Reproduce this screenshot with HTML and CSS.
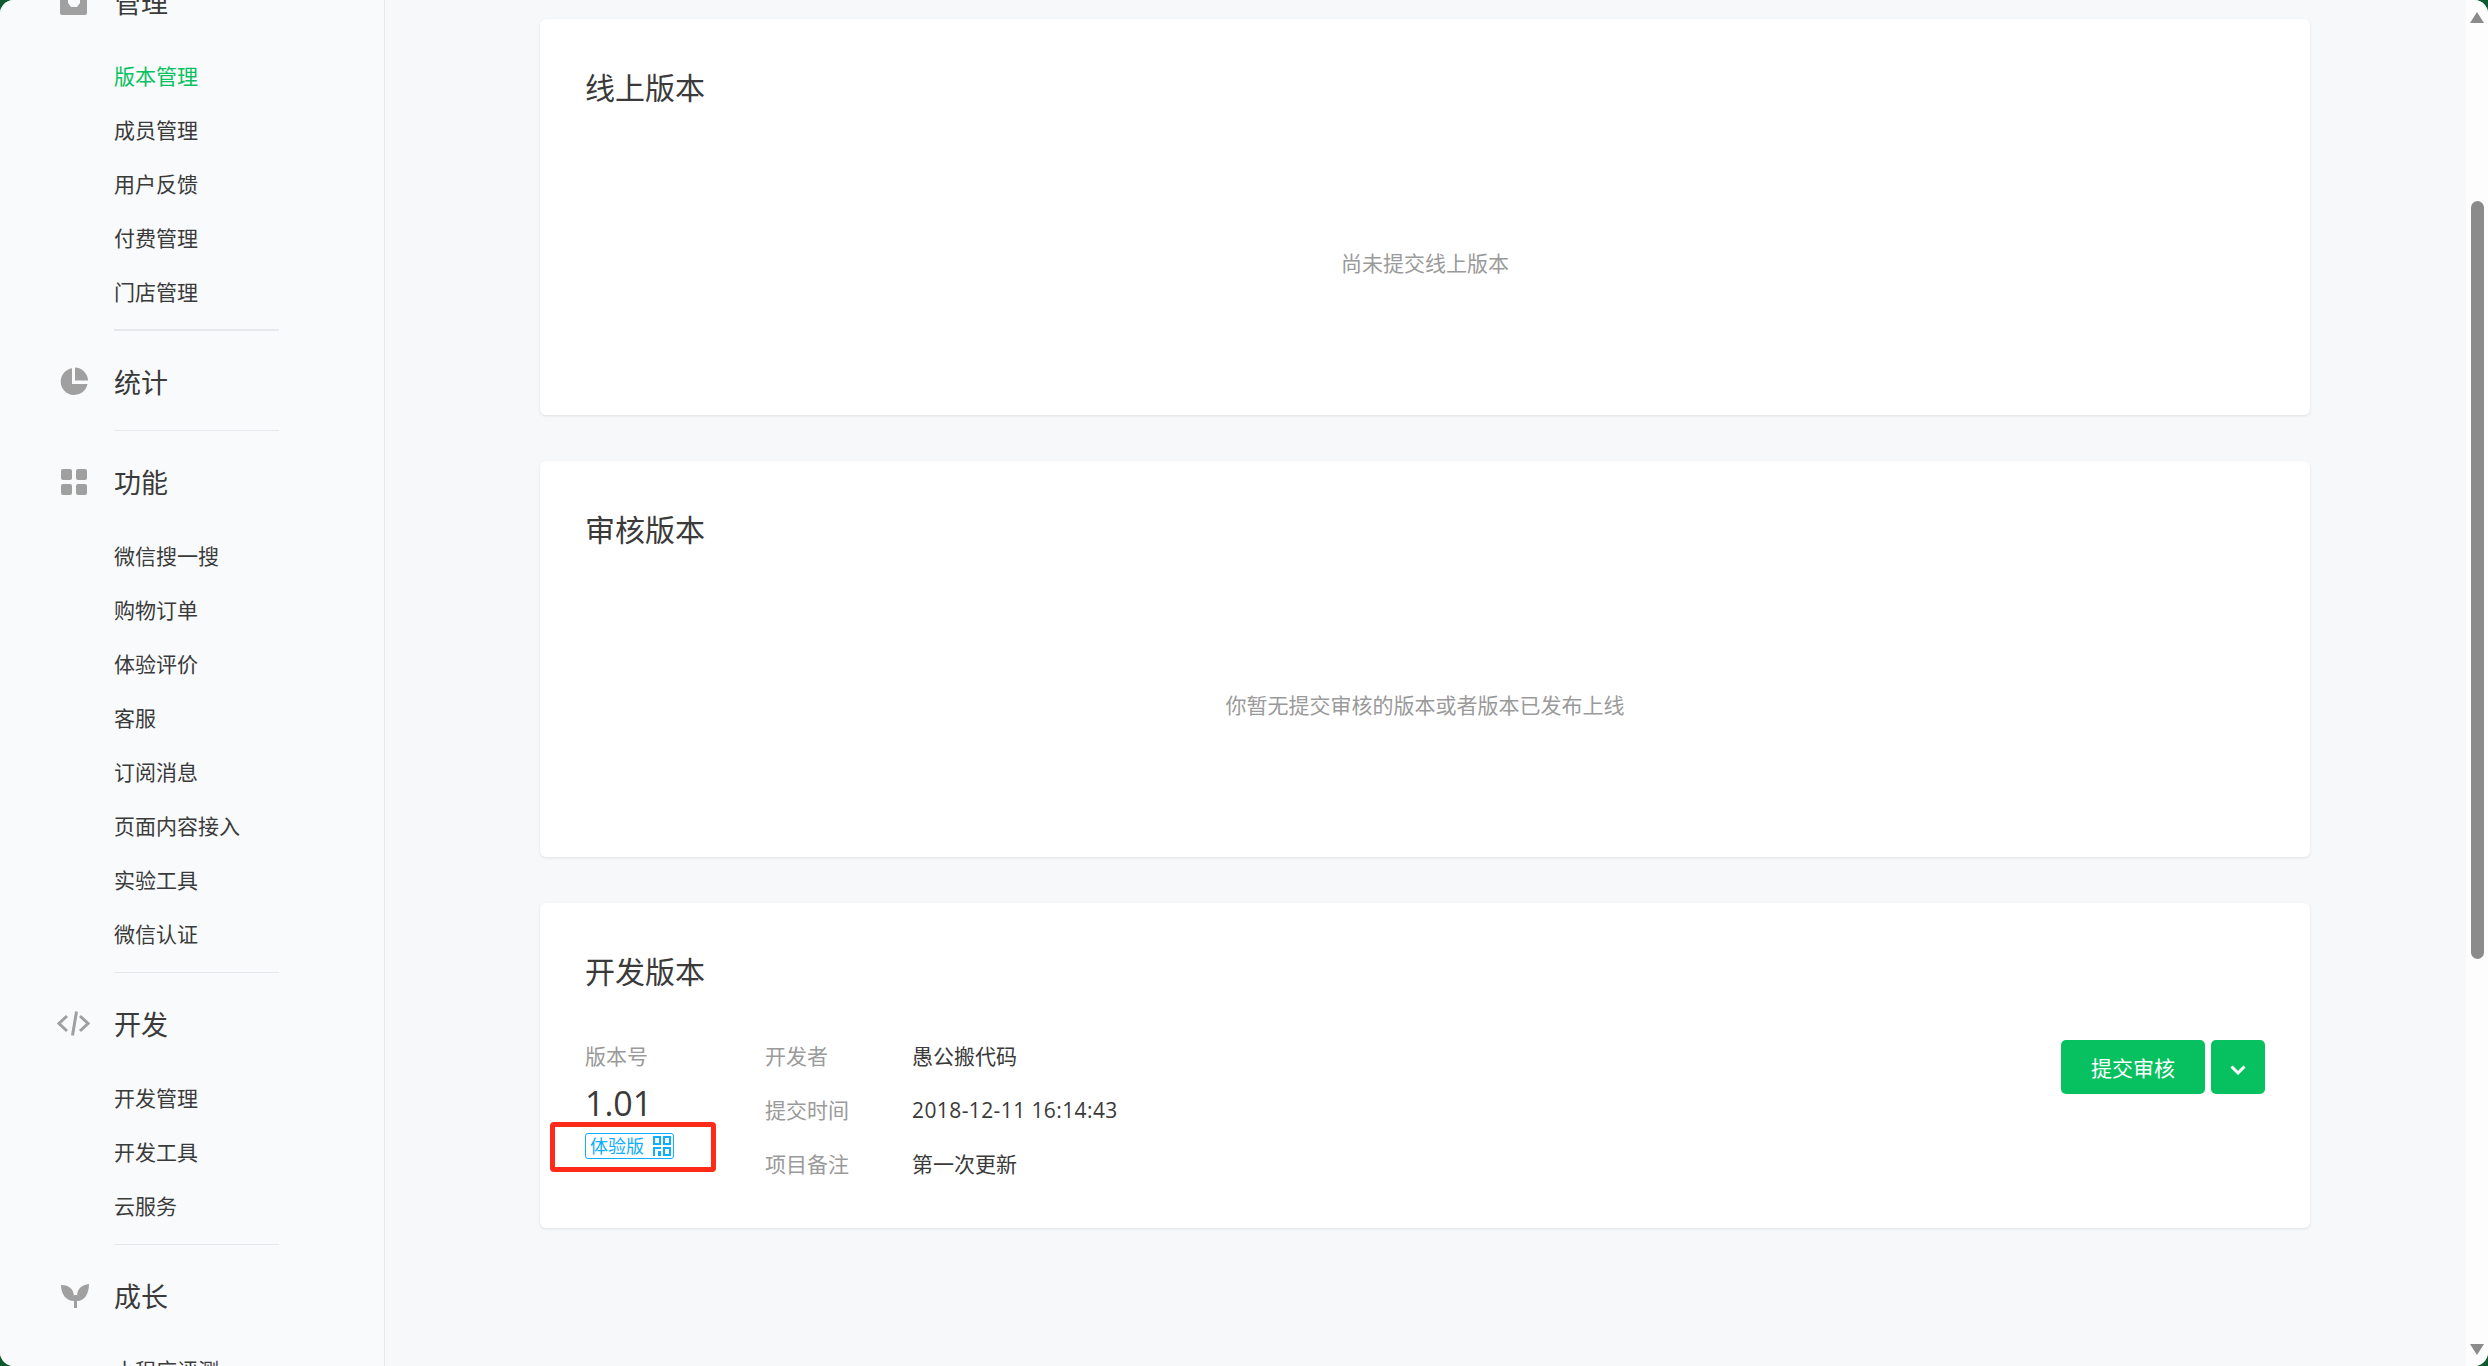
FILE: index.html
```html
<!DOCTYPE html>
<html lang="zh-CN">
<head>
    <meta charset="UTF-8">
    <title>版本管理</title>
    <link rel="stylesheet" href="styles.css">
</head>
<body>

<div class="window">
    <div class="sidebar">
        <div class="menu-group thick">
            <div class="menu-head">
                <svg class="menu-icon" viewBox="0 0 33 33"><path d="M3 4h8v14l3 4h6l3-4V4h7v24a2 2 0 0 1-2 2H5a2 2 0 0 1-2-2z" fill="#a0a0a0"/></svg>
                <span>管理</span>
            </div>
            <div class="menu-sub">
                <a class="active">版本管理</a>
                <a>成员管理</a>
                <a>用户反馈</a>
                <a>付费管理</a>
                <a>门店管理</a>
            </div>
        </div>
        <div class="menu-group">
            <div class="menu-head">
                <svg class="menu-icon" viewBox="0 0 33 33" fill="#a0a0a0"><path d="M15 3.200A13.500 13.500 0 1 0 30.500 19H15z"/><path d="M18 2.500A13.500 13.500 0 0 1 31 15.500H18z"/></svg>
                <span>统计</span>
            </div>
        </div>
        <div class="menu-group">
            <div class="menu-head">
                <svg class="menu-icon" viewBox="0 0 33 33" fill="#a0a0a0"><rect x="4" y="4" width="11" height="11" rx="2"/><rect x="19" y="4" width="11" height="11" rx="2"/><rect x="4" y="19" width="11" height="11" rx="2"/><rect x="19" y="19" width="11" height="11" rx="2"/></svg>
                <span>功能</span>
            </div>
            <div class="menu-sub">
                <a>微信搜一搜</a>
                <a>购物订单</a>
                <a>体验评价</a>
                <a>客服</a>
                <a>订阅消息</a>
                <a>页面内容接入</a>
                <a>实验工具</a>
                <a>微信认证</a>
            </div>
        </div>
        <div class="menu-group">
            <div class="menu-head">
                <svg class="menu-icon" viewBox="0 0 33 33" fill="none" stroke="#a0a0a0" stroke-width="3"><path d="M10 9l-8 7.500 8 7.500M23 9l8 7.500-8 7.500M19.500 4.500l-4 24"/></svg>
                <span>开发</span>
            </div>
            <div class="menu-sub">
                <a>开发管理</a>
                <a>开发工具</a>
                <a>云服务</a>
            </div>
        </div>
        <div class="menu-group no-line">
            <div class="menu-head">
                <svg class="menu-icon" viewBox="0 0 33 33" fill="#a0a0a0"><path d="M4 6c7 0 13 3 13 12v4C9 22 4 15 4 6zM32 5c-7 1-12 4-12 13v4c8 0 12-8 12-17z"/><rect x="17" y="16" width="3" height="13"/></svg>
                <span>成长</span>
            </div>
            <div class="menu-sub">
                <a>小程序评测</a>
            </div>
        </div>
    </div>

    <div class="main">
        <div class="card">
            <h2>线上版本</h2>
            <div class="empty">尚未提交线上版本</div>
        </div>
        <div class="card">
            <h2>审核版本</h2>
            <div class="empty">你暂无提交审核的版本或者版本已发布上线</div>
        </div>
        <div class="card dev-card">
            <h2>开发版本</h2>
            <div class="version-row">
                <div class="version-col">
                    <div class="version-label">版本号</div>
                    <div class="version-num">1.01</div>
                    <div class="version-tag">
                        体验版
                        <svg class="qr" viewBox="0 0 18 20" fill="#10aeff"><path d="M0 0h8v9H0zM2 2v5h4V2zM10 0h8v9h-8zM12 2v5h4V2zM0 11h8v2H2v7H0zM5 15h3v5H5zM10 11h8v9h-8zM12 13v5h4v-5z" fill-rule="evenodd"/></svg>
                    </div>
                    <div class="mark"></div>
                </div>
                <div class="info-list">
                    <div class="info-row"><span class="info-label">开发者</span><span>愚公搬代码</span></div>
                    <div class="info-row"><span class="info-label">提交时间</span><span class="info-date">2018-12-11 16:14:43</span></div>
                    <div class="info-row"><span class="info-label">项目备注</span><span>第一次更新</span></div>
                </div>
                <div class="actions">
                    <button class="btn">提交审核</button>
                    <button class="btn btn-arrow">
                        <svg width="16" height="10" viewBox="0 0 16 10" fill="none" stroke="#fff" stroke-width="3"><path d="M1.500 1.500L8 8l6.500-6.500"/></svg>
                    </button>
                </div>
            </div>
        </div>
    </div>

    <div class="scrollbar">
        <div class="arrow-up"></div>
        <div class="thumb"></div>
        <div class="arrow-down"></div>
    </div>
</div>

</body>
</html>
```
FILE: styles.css
```css
html, body {
    margin: 0;
    height: 100%;
    background-color: #0d5a2c;
    overflow: hidden;
}

.window {
    display: flex;
    height: 1366px;
    border-radius: 14px;
    overflow: hidden;
    background-color: #f7f8fa;
    font-family: "Open Sans", "Noto Sans CJK SC", sans-serif;
    color: #3a3a3a;
}

/* sidebar, scrolled so the first heading is cut off */
.sidebar {
    width: 385px;
    flex-shrink: 0;
    box-sizing: border-box;
    margin-top: -49px;
    padding-left: 57px;
    background-color: #f9fafc;
    border-right: 1px solid #e7e8eb;
}

.menu-group {
    width: 222px;
    padding-top: 23px;
}

/* the line under a group only runs under the text column */
.menu-group::after {
    content: "";
    display: block;
    height: 1px;
    margin: 22px 0 0 57px;
    background-color: #e7e8eb;
}

.menu-group:has(.menu-sub)::after {
    margin-top: 11px;
}

.menu-group.thick::after {
    height: 2px;
    margin-top: 10px;
}

.menu-group.no-line::after {
    display: none;
}

.menu-head {
    display: flex;
    align-items: center;
    gap: 24px;
    height: 54px;
    font-size: 27px;
}

.menu-icon {
    width: 33px;
    height: 33px;
    flex-shrink: 0;
}

.menu-sub {
    margin-top: 21px;
    padding-left: 57px;
}

.menu-sub a {
    display: block;
    height: 54px;
    line-height: 54px;
    font-size: 21px;
    white-space: nowrap;
}

.menu-sub a.active {
    color: #07c160;
}

/* main column */
.main {
    flex: 1;
    padding: 19px 0 0 155px;
}

.card {
    box-sizing: border-box;
    width: 1770px;
    height: 396px;
    margin-bottom: 46px;
    padding: 45px 45px 0;
    background-color: #fff;
    border-radius: 6px;
    box-shadow: 0 1px 3px rgba(0,0,0,0.1);
}

.card h2 {
    margin: 0;
    height: 48px;
    line-height: 48px;
    font-size: 30px;
    font-weight: normal;
}

.empty {
    height: 302px;
    line-height: 302px;
    text-align: center;
    font-size: 21px;
    color: #9a9a9a;
}

.dev-card {
    height: 325px;
}

.version-row {
    display: flex;
    margin-top: 33px;
    font-size: 21px;
}

.version-col {
    position: relative;
    width: 180px;
}

.version-label {
    height: 54px;
    line-height: 54px;
    color: #9a9a9a;
}

.version-num {
    height: 40px;
    line-height: 40px;
    font-size: 34px;
}

.version-tag {
    box-sizing: border-box;
    display: flex;
    align-items: center;
    justify-content: space-between;
    width: 89px;
    height: 26px;
    margin-top: 10px;
    padding: 0 2px 0 4px;
    border: 1px solid #10aeff;
    border-radius: 3px;
    color: #10aeff;
    font-size: 18px;
    line-height: 1;
}

.qr {
    width: 18px;
    height: 20px;
}

/* red annotation drawn on top of the screenshot */
.mark {
    position: absolute;
    left: -35px;
    top: 93px;
    width: 166px;
    height: 50px;
    box-sizing: border-box;
    border: 5px solid #ff2a17;
    border-radius: 4px;
}

.info-list {
    flex: 1;
}

.info-row {
    display: flex;
    height: 54px;
    line-height: 54px;
}

.info-label {
    width: 147px;
    color: #9a9a9a;
}

.info-date {
    letter-spacing: 0.4px;
}

.actions {
    display: flex;
    gap: 6px;
    margin-top: 11px;
}

.btn {
    width: 144px;
    height: 54px;
    padding: 0;
    border: none;
    border-radius: 5px;
    background-color: #07c160;
    color: #fff;
    font-family: inherit;
    font-size: 21px;
}

.btn-arrow {
    width: 54px;
}

.scrollbar {
    width: 22px;
    flex-shrink: 0;
    display: flex;
    flex-direction: column;
    align-items: center;
    background-color: #fdfdfd;
}

.arrow-up {
    margin-top: 12px;
    border: 7px solid transparent;
    border-top: none;
    border-bottom: 11px solid #8b8b8b;
}

.thumb {
    width: 13px;
    height: 758px;
    margin-top: 178px;
    border-radius: 7px;
    background-color: #8b8b8b;
}

.arrow-down {
    margin-top: auto;
    margin-bottom: 11px;
    border: 7px solid transparent;
    border-bottom: none;
    border-top: 11px solid #8b8b8b;
}
```
